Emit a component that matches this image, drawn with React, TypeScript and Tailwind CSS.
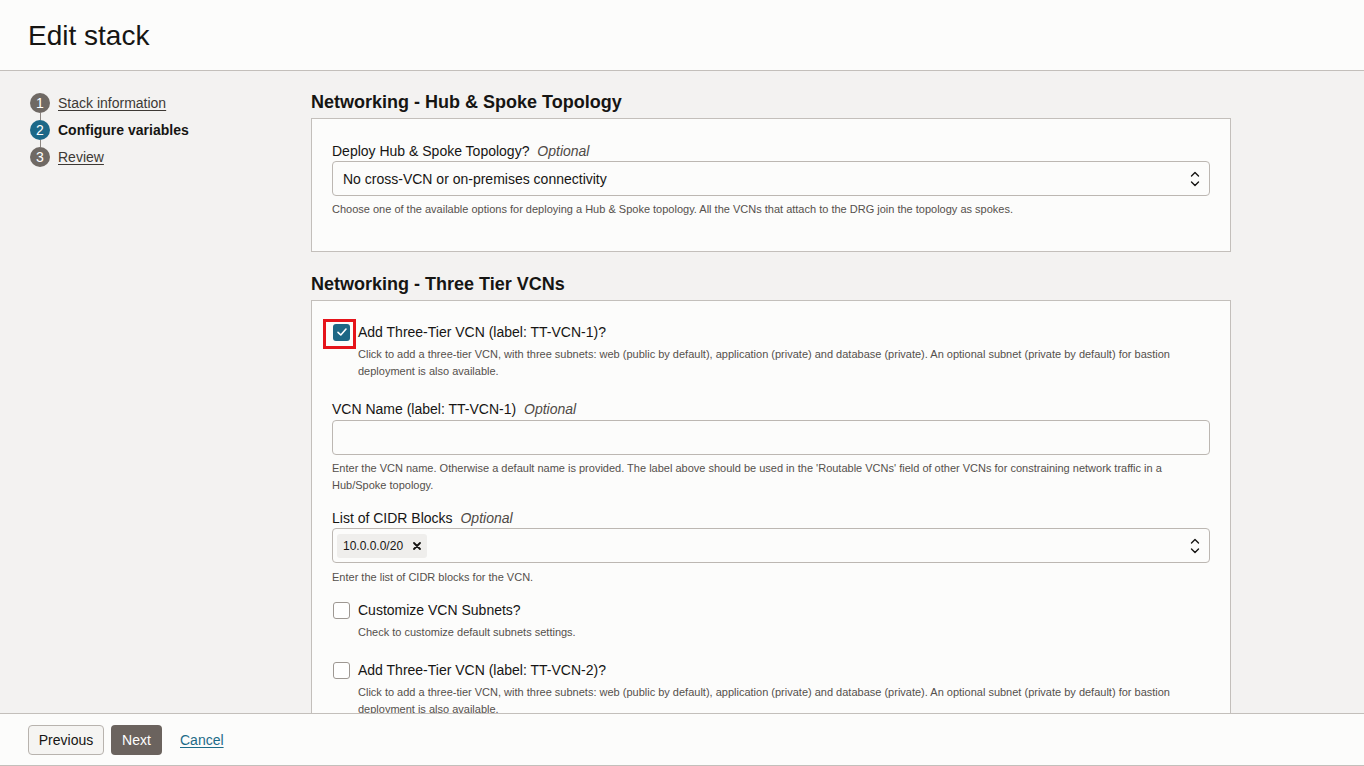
import React from 'react';

const font = { fontFamily: '"Liberation Sans", Arial, sans-serif' };

const steps = [
  { n: 1, label: 'Stack information', active: false },
  { n: 2, label: 'Configure variables', active: true },
  { n: 3, label: 'Review', active: false },
];

const ChevronUpDown: React.FC = () => (
  <svg width="12" height="18" viewBox="0 0 12 18" fill="none" stroke="#161513" strokeWidth="1.4" strokeLinecap="round" strokeLinejoin="round">
    <path d="M2.5 6 L6 2.5 L9.5 6" />
    <path d="M2.5 12 L6 15.5 L9.5 12" />
  </svg>
);

const Checkbox: React.FC<{ checked?: boolean }> = ({ checked }) =>
  checked ? (
    <div className="w-[17px] h-[17px] rounded-[3px] bg-[#1d6785] flex items-center justify-center shrink-0">
      <svg width="12" height="12" viewBox="0 0 12 12" fill="none" stroke="white" strokeWidth="1.6" strokeLinecap="round" strokeLinejoin="round">
        <path d="M2 6.3 L4.8 9 L10 3" />
      </svg>
    </div>
  ) : (
    <div className="w-[17px] h-[17px] rounded-[3px] border border-[#9e9893] bg-white shrink-0" />
  );

const Label: React.FC<{ text: string }> = ({ text }) => (
  <div className="text-sm leading-[18px] text-[#161513]">
    {text} <span className="italic text-[#4f4a46] ml-1">Optional</span>
  </div>
);

const Help: React.FC<{ children: React.ReactNode; className?: string }> = ({ children, className }) => (
  <p className={`text-[11px] leading-[17px] text-[#55504c] ${className ?? ''}`}>{children}</p>
);

export default function App() {
  return (
    <div className="h-screen w-full flex flex-col bg-[#f3f2f1] overflow-hidden" style={font}>
      {/* Header */}
      <div className="h-[71px] shrink-0 bg-[#fcfcfb] border-b border-[#c3bfbb] flex items-center px-7">
        <h1 className="text-[28px] text-[#161513] leading-none mt-[2px]">Edit stack</h1>
      </div>

      {/* Body */}
      <div className="flex-1 flex overflow-hidden">
        {/* Steps */}
        <div className="w-[311px] shrink-0 pl-[30px] pt-[22px]">
          {steps.map((step, i) => (
            <div key={step.n}>
              <div className="flex items-center gap-[8px] h-[20px]">
                <div
                  className={`w-[20px] h-[20px] rounded-full flex items-center justify-center text-[14px] text-white ${
                    step.active ? 'bg-[#1b6888]' : 'bg-[#6f6964]'
                  }`}
                >
                  {step.n}
                </div>
                {step.active ? (
                  <span className="text-sm font-bold text-[#161513]">{step.label}</span>
                ) : (
                  <span className="text-sm text-[#3d3935] underline underline-offset-2">{step.label}</span>
                )}
              </div>
              {i < steps.length - 1 && <div className="ml-[9.5px] w-[1px] h-[7px] bg-[#8c8681]" />}
            </div>
          ))}
        </div>

        {/* Content */}
        <div className="w-[920px] shrink-0 pt-[19px]">
          <h2 className="text-[18px] leading-[24px] font-bold text-[#161513] mb-[4px]">Networking - Hub &amp; Spoke Topology</h2>
          <div className="bg-[#fcfcfb] border border-[#c3bfbb] px-5 pt-[23px] pb-[33px]">
            <div className="h-[19px]">
              <Label text="Deploy Hub & Spoke Topology?" />
            </div>
            <div className="h-[35px] border border-[#bcb7b2] rounded-[4px] bg-[#fcfcfb] flex items-center justify-between pl-[10px] pr-[8px]">
              <span className="text-sm text-[#161513]">No cross-VCN or on-premises connectivity</span>
              <ChevronUpDown />
            </div>
            <Help className="mt-[5px]">
              Choose one of the available options for deploying a Hub &amp; Spoke topology. All the VCNs that attach to the DRG join the topology as spokes.
            </Help>
          </div>

          <h2 className="text-[18px] leading-[24px] font-bold text-[#161513] mt-[20px] mb-[4px]">Networking - Three Tier VCNs</h2>
          <div className="bg-[#fcfcfb] border border-[#c3bfbb] border-b-0 px-5 pt-[22px] pb-10">
            {/* VCN 1 */}
            <div className="flex items-center gap-[8px] pl-[1px]">
              <div className="relative">
                <Checkbox checked />
                <div className="absolute -left-[10px] -top-[5px] w-[33px] h-[30px] border-[3px] border-[#e5141b]" />
              </div>
              <span className="text-sm leading-[18px] text-[#161513]">Add Three-Tier VCN (label: TT-VCN-1)?</span>
            </div>
            <Help className="mt-[5px] pl-[26px]">
              Click to add a three-tier VCN, with three subnets: web (public by default), application (private) and database (private). An optional subnet (private by default) for bastion deployment is also available.
            </Help>

            {/* VCN name */}
            <div className="mt-[20px] h-[20px]">
              <Label text="VCN Name (label: TT-VCN-1)" />
            </div>
            <div className="h-[35px] border border-[#bcb7b2] rounded-[4px] bg-[#fcfcfb]" />
            <Help className="mt-[5px]">
              Enter the VCN name. Otherwise a default name is provided. The label above should be used in the 'Routable VCNs' field of other VCNs for constraining network traffic in a Hub/Spoke topology.
            </Help>

            {/* CIDR */}
            <div className="mt-[15px] h-[19px]">
              <Label text="List of CIDR Blocks" />
            </div>
            <div className="h-[35px] border border-[#bcb7b2] rounded-[4px] bg-[#fcfcfb] flex items-center justify-between pl-[4px] pr-[8px]">
              <div className="h-[24px] px-[6px] bg-[#efeeec] rounded-[3px] flex items-center gap-[10px]">
                <span className="text-[12px] text-[#161513]">10.0.0.0/20</span>
                <svg width="8" height="8" viewBox="0 0 8 8" stroke="#161513" strokeWidth="1.8" strokeLinecap="round">
                  <path d="M1 1 L7 7 M7 1 L1 7" />
                </svg>
              </div>
              <ChevronUpDown />
            </div>
            <Help className="mt-[6px]">Enter the list of CIDR blocks for the VCN.</Help>

            {/* Customize */}
            <div className="mt-[15px] flex items-center gap-[8px] pl-[1px]">
              <Checkbox />
              <span className="text-sm leading-[18px] text-[#161513]">Customize VCN Subnets?</span>
            </div>
            <Help className="mt-[5px] pl-[26px]">Check to customize default subnets settings.</Help>

            {/* VCN 2 */}
            <div className="mt-[20px] flex items-center gap-[8px] pl-[1px]">
              <Checkbox />
              <span className="text-sm leading-[18px] text-[#161513]">Add Three-Tier VCN (label: TT-VCN-2)?</span>
            </div>
            <Help className="mt-[5px] pl-[26px]">
              Click to add a three-tier VCN, with three subnets: web (public by default), application (private) and database (private). An optional subnet (private by default) for bastion deployment is also available.
            </Help>
          </div>
        </div>
      </div>

      {/* Footer */}
      <div className="h-[53px] shrink-0 bg-[#fcfcfb] border-t border-b border-[#c3bfbb] flex items-center gap-[7px] pl-7">
        <button className="h-[30px] w-[76px] rounded-[4px] border border-[#b8b3ae] bg-[#f5f4f2] text-sm text-[#161513]">Previous</button>
        <button className="h-[30px] w-[51px] rounded-[4px] bg-[#6b635e] text-sm text-white">Next</button>
        <a className="ml-[11px] text-sm text-[#1d6b88] underline underline-offset-2 cursor-pointer">Cancel</a>
      </div>
    </div>
  );
}
